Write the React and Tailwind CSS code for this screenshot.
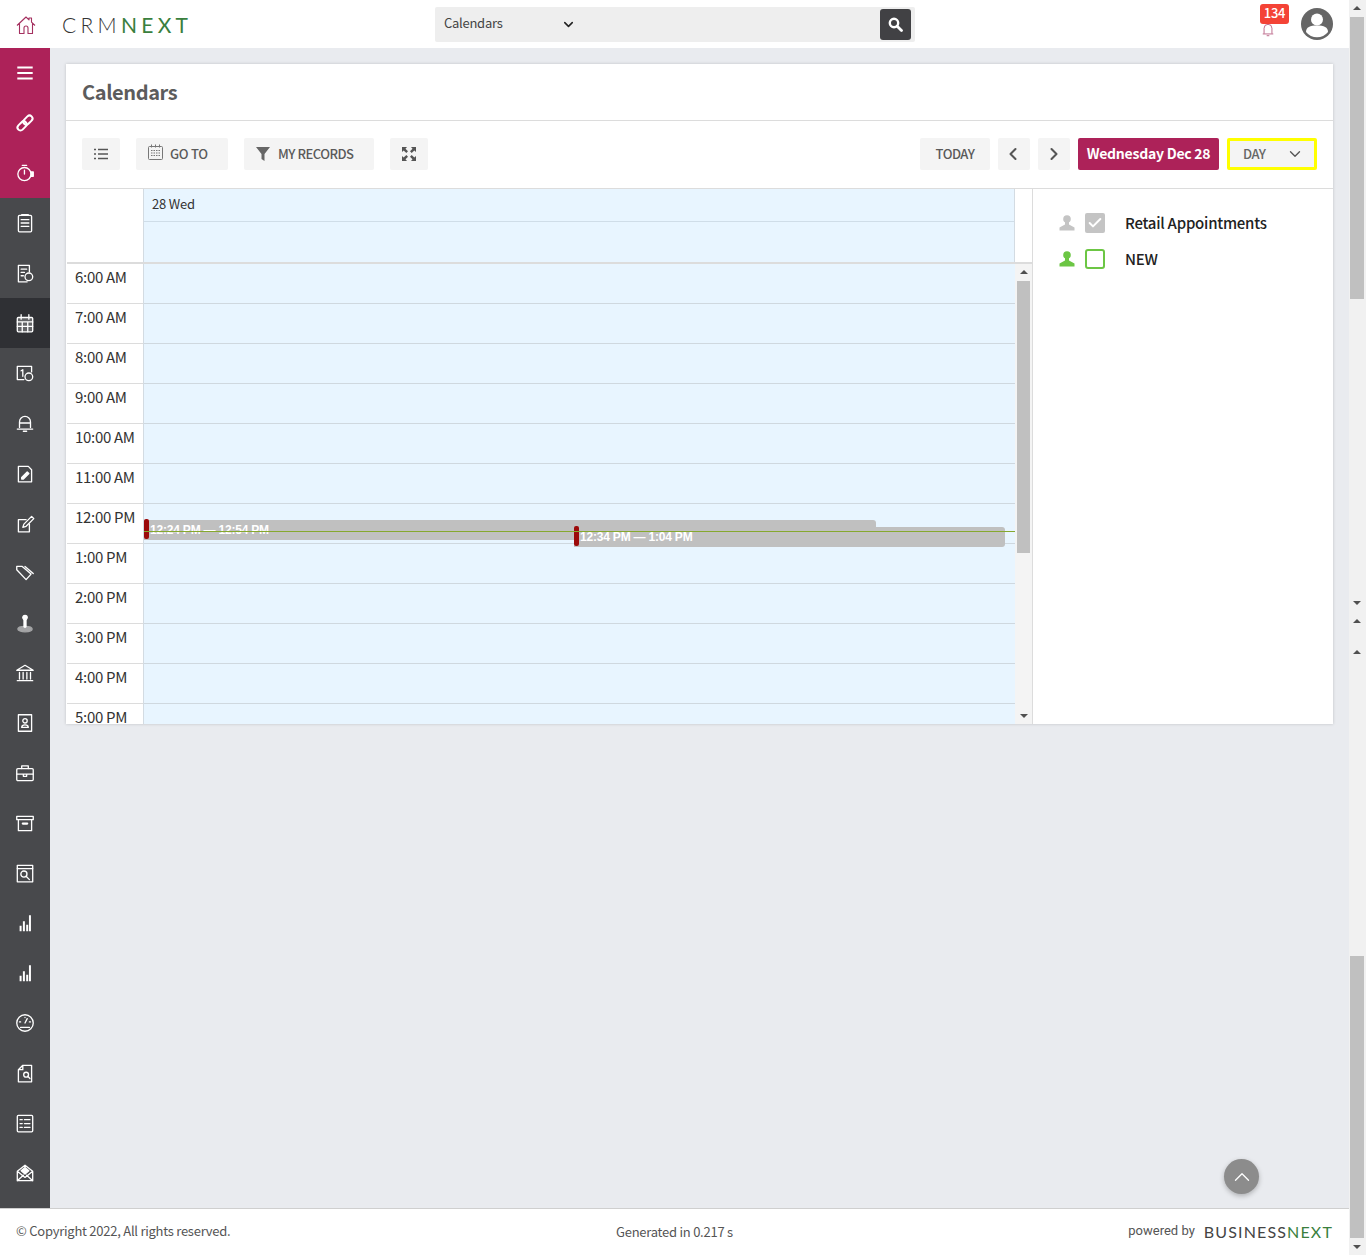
import { ChevronDown, ChevronLeft, ChevronRight, ChevronUp, Check } from 'lucide-react';

const hours = ['6:00 AM', '7:00 AM', '8:00 AM', '9:00 AM', '10:00 AM', '11:00 AM', '12:00 PM', '1:00 PM', '2:00 PM', '3:00 PM', '4:00 PM', '5:00 PM'];

// sidebar glyphs, all drawn on a 20x20 box in white
const glyph = {
  menu: <path d="M3 5h14M3 10h14M3 15h14" strokeWidth="2" strokeLinecap="butt" />,
  link: <g transform="rotate(-45 10 10)"><rect x="1.500" y="7.300" width="9.500" height="5.400" rx="2.700" strokeWidth="1.800" /><rect x="9" y="7.300" width="9.500" height="5.400" rx="2.700" strokeWidth="1.800" /></g>,
  timer: <><circle cx="9.500" cy="11" r="6" /><path d="M9.500 7.500v3.500M7.500 3h4" /><rect x="15.500" y="9" width="2" height="4" fill="#fff" /></>,
  clipboard: <><rect x="4" y="3" width="12" height="15" rx="1" /><path d="M7 2.500h6M6.500 7h7M6.500 10h7M6.500 13h7" /></>,
  docClock: <><path d="M12 18H4V3h10v6M6.500 6.500h5M6.500 9.500h3M6.500 12.500h2" /><circle cx="13.500" cy="13.500" r="3.500" /></>,
  calendar: <><rect x="3" y="5" width="14" height="13" rx="1" fill="#fff" fillOpacity="0.25" /><path d="M6.500 2.500v4M13.500 2.500v4M3 9h14M3 13h14M7.500 9v9M12.500 9v9" /></>,
  dayClock: <><path d="M9 16H3V4h13v5" /><path d="M6.500 8l1.500-1v6" /><circle cx="13.500" cy="13.500" r="3.500" /></>,
  bell: <path d="M5 14V9a5 5 0 0 1 10 0v5M3 15.500h14M8.500 17.500h3M5 10h10" />,
  docPen: <><path d="M4 4h9l3 3v11H4z" /><path d="M7 14l5-5 1.500 1.500-5 5H7z" fill="#fff" /></>,
  notePen: <><path d="M14 11v7H4V7h7" /><path d="M8 14l1-3 7-7 2 2-7 7z" /></>,
  tag: <path d="M2.500 7V4h5l8 7-4.500 5zM10 4l7.500 6.500" />,
  pawn: <><circle cx="10" cy="5" r="2" fill="#fff" /><path d="M10 7v6" strokeWidth="3" /><ellipse cx="10" cy="15.500" rx="6.500" ry="2.500" fill="#fff" opacity="0.5" /></>,
  bank: <path d="M2.500 7.500L10 3l7.500 4.500zM5 9.500v6M8.300 9.500v6M11.700 9.500v6M15 9.500v6M3 17h14" />,
  contact: <><rect x="4" y="2.500" width="12" height="15" /><circle cx="10" cy="8" r="2" /><path d="M7 14c0-3 6-3 6 0z" /></>,
  briefcase: <><rect x="2.500" y="6" width="15" height="11" rx="1" /><path d="M7 6V3.500h6V6M2.500 11h15M8.500 11h3v2h-3z" /></>,
  archive: <><path d="M2.500 4h15v3h-15zM4 7v10h12V7" /><path d="M8 10.500h4" strokeWidth="2" /></>,
  searchWin: <><rect x="3" y="3" width="14" height="15" /><path d="M3 6h14" /><circle cx="9" cy="11" r="2.800" /><path d="M11 13l3 3" /></>,
  bars: <path d="M6 17.500v-5M9 17.500v-9M12 17.500v-6M14.500 17.500V3" strokeWidth="1.800" strokeLinecap="butt" />,
  gauge: <><circle cx="10" cy="10" r="7.500" /><path d="M10 10l2-4M6 14h8M5 9h1M14 9h1M10 5v0" /></>,
  docSearch: <><path d="M8 3h8v15H4V7zM8 3v4H4" /><circle cx="11" cy="11.500" r="2.200" /><path d="M12.500 13l2 2" /></>,
  checklist: <><rect x="3" y="3" width="14" height="15" rx="1" /><path d="M5.500 7h2M9.500 7h5M5.500 10.500h2M9.500 10.500h5M5.500 14h2M9.500 14h5" /></>,
  mailOpen: <><path d="M3 8.500L10 3l7 5.500V17H3zM3 17l5.500-5M17 17l-5.500-5M3 8.500l7 5.500 7-5.500" /><path d="M10 5l3.500 3-3.500 3-3.500-3z" fill="#fff" /></>,
};

const sideTop = ['menu', 'link', 'timer'];
const sideRest = ['clipboard', 'docClock', 'calendar', 'dayClock', 'bell', 'docPen', 'notePen', 'tag', 'pawn', 'bank', 'contact', 'briefcase', 'archive', 'searchWin', 'bars', 'bars', 'gauge', 'docSearch', 'checklist', 'mailOpen'];

function SideIcon({ name, active }) {
  return (
    <div className={'h-[50px] flex items-center justify-center ' + (active ? 'bg-[#2f3034]' : '')}>
      <svg width="22" height="22" viewBox="0 0 20 20" fill="none" stroke="#fff" strokeWidth="1.200" strokeLinecap="round" strokeLinejoin="round">
        {glyph[name]}
      </svg>
    </div>
  );
}

function PersonIcon({ color }) {
  return (
    <svg width="18" height="18" viewBox="0 0 18 18" fill={color}>
      <circle cx="9" cy="5" r="3.800" />
      <path d="M7 8h4v2.500l5.500 3V16.500h-15v-3l5.500-3z" />
    </svg>
  );
}

function TriUp({ className }) {
  return <div className={'w-0 h-0 border-x-[4px] border-x-transparent border-b-[4px] border-b-[#505050] ' + (className || '')} />;
}

function TriDown({ className }) {
  return <div className={'w-0 h-0 border-x-[4px] border-x-transparent border-t-[4px] border-t-[#505050] ' + (className || '')} />;
}

function Event({ className, time }) {
  return (
    <div className={'absolute h-5 bg-[#c0c0c0] rounded-r-[3px] text-white text-[12px] font-bold leading-5 pl-[6px] tracking-[-0.2px] whitespace-nowrap font-["Liberation_Sans",sans-serif] ' + className}>
      <div className="absolute left-0 -top-[1px] h-[20px] w-[5px] bg-[#9c0a0a] rounded-[2px]" />
      {time}
    </div>
  );
}

export default function App() {
  return (
    <div className="h-[1255px] flex bg-[#e9ebef] overflow-hidden text-[#333] font-['Noto_Sans_CJK_SC','Source_Sans_Pro',sans-serif]">
      <div className="w-[1349px] flex flex-col">
        {/* Top bar */}
        <header className="h-12 shrink-0 bg-white flex items-center relative">
          <svg className="ml-[16px] mt-[1px]" width="20" height="20" viewBox="0 0 20 20" fill="none" stroke="#a4305f" strokeWidth="1.100" strokeLinejoin="round">
            <path d="M1 10.500L10 2l3 2.800V3h2.500v4.200l3.500 3.300M3.500 8.500V18.500h4.500v-5.500a2 2 0 0 1 4 0v5.500h4.500V8.500" />
          </svg>
          <div className="ml-[26px] text-[21px] leading-none tracking-[4.300px] font-['Lato',sans-serif] font-light text-[#333] whitespace-nowrap">
            CRM<span className="text-[#3a7f3e] font-normal">NEXT</span>
          </div>
          <div className="absolute left-[435px] top-[7px] w-[480px] h-[35px] bg-[#eeeeee] rounded-[2px] flex items-center">
            <div className="w-[147px] pl-[9px] pr-[6px] flex items-center justify-between text-[13px] tracking-[-0.27px] text-[#444]">
              <span className="pb-[3px]">Calendars</span>
              <ChevronDown size={15} strokeWidth={2.500} className="text-[#222]" />
            </div>
            <div className="flex-1" />
            <div className="w-[31px] h-[31px] mr-[4px] bg-[#414144] rounded-[3px] flex items-center justify-center">
              <svg width="15" height="15" viewBox="0 0 15 15" fill="none" stroke="#fff">
                <circle cx="6" cy="6" r="4.200" strokeWidth="2.400" />
                <path d="M9.200 9.200l4.300 4.300" strokeWidth="2.800" strokeLinecap="round" />
              </svg>
            </div>
          </div>
          <div className="ml-auto mr-[16px] flex items-center relative">
            <svg className="mt-[11px] mr-[26px]" width="14" height="14" viewBox="0 0 16 16" fill="none" stroke="#a4305f" strokeWidth="0.800">
              <path d="M3.500 12V6a4.500 4.500 0 0 1 9 0v6M2 12.500h12M6.500 14.500h3" />
            </svg>
            <div className="absolute left-[-1px] top-[-4px] w-[29px] h-[20px] bg-[#f44336] rounded-[3px] text-white text-[13px] font-medium leading-[18px] tracking-[-0.2px] text-center">134</div>
            <svg width="32" height="32" viewBox="0 0 32 32">
              <circle cx="16" cy="16" r="16" fill="#666" />
              <circle cx="16" cy="11.500" r="6" fill="#fff" />
              <path d="M5 24c0-5 4-6.500 11-6.500S27 19 27 24a14 14 0 0 1-22 0z" fill="#fff" />
            </svg>
          </div>
        </header>

        <div className="flex-1 flex min-h-0">
          {/* Left rail */}
          <aside className="w-[50px] shrink-0 bg-[#48494c]">
            <div className="bg-[#ad2259]">
              {sideTop.map((n, i) => <SideIcon key={i} name={n} />)}
            </div>
            {sideRest.map((n, i) => <SideIcon key={i} name={n} active={n === 'calendar'} />)}
          </aside>

          <main className="flex-1 min-w-0 flex flex-col">
            <div className="flex-1 pt-4 pl-4 pr-4">
              <section className="bg-white shadow-[0_0_3px_rgba(0,0,0,0.18)]">
                <div className="h-[57px] border-b border-[#dcdcdc] flex items-center pl-4 text-[20px] tracking-[-0.4px] font-bold text-[#5c5c5c]">Calendars</div>

                {/* Toolbar */}
                <div className="h-[67px] px-4 pb-[2px] flex items-center text-[13px] tracking-[-0.3px] text-[#5a5a5a]">
                  <button className="w-[38px] h-8 bg-[#f4f4f4] rounded-[2px] flex items-center justify-center">
                    <svg width="14" height="12" viewBox="0 0 14 12" stroke="#555" strokeWidth="1.400">
                      <path d="M0 1.500h2M4 1.500h10M0 6h2M4 6h10M0 10.500h2M4 10.500h10" />
                    </svg>
                  </button>
                  <button className="ml-4 w-[92px] h-8 bg-[#f4f4f4] rounded-[2px] flex items-center pl-3 font-medium">
                    <svg className="mr-[7px] mb-[3px]" width="15" height="16" viewBox="0 0 15 16" fill="none" stroke="#777" strokeWidth="1">
                      <rect x="0.500" y="2.500" width="14" height="13" rx="1" />
                      <path d="M3.500 0.500v3M7.500 0.500v3M11.500 0.500v3M3 6.500h9M3 9h9M3 11.500h9" strokeDasharray="1.500 1" />
                    </svg>
                    GO TO
                  </button>
                  <button className="ml-4 w-[130px] h-8 bg-[#f4f4f4] rounded-[2px] flex items-center pl-3 font-medium tracking-[-0.5px]">
                    <svg className="mr-[8px]" width="14" height="14" viewBox="0 0 14 14" fill="#666">
                      <path d="M0 0h14L8.500 7v7l-3-2V7z" />
                    </svg>
                    MY RECORDS
                  </button>
                  <button className="ml-4 w-[38px] h-8 bg-[#f4f4f4] rounded-[2px] flex items-center justify-center">
                    <svg width="14" height="14" viewBox="0 0 14 14" fill="#555">
                      <path d="M0 0h5L3.500 1.700 6 4.300 4.300 6 1.700 3.500 0 5zM14 0v5l-1.700-1.500L9.700 6 8 4.300l2.500-2.600L9 0zM0 14V9l1.700 1.500L4.300 8 6 9.700l-2.500 2.600L5 14zM14 14H9l1.500-1.700L8 9.700 9.700 8l2.600 2.500L14 9z" />
                    </svg>
                  </button>

                  <button className="ml-auto w-[70px] h-8 bg-[#f4f4f4] rounded-[2px] font-medium tracking-[-0.5px]">TODAY</button>
                  <button className="ml-2 w-8 h-8 pr-[3px] bg-[#f4f4f4] rounded-[2px] flex items-center justify-center">
                    <ChevronLeft size={20} strokeWidth={2.500} className="text-[#555]" />
                  </button>
                  <button className="ml-2 w-8 h-8 pr-[1px] bg-[#f4f4f4] rounded-[2px] flex items-center justify-center">
                    <ChevronRight size={20} strokeWidth={2.500} className="text-[#555]" />
                  </button>
                  <div className="ml-2 w-[141px] h-8 bg-[#ad2259] rounded-[2px] text-white text-[14px] tracking-[-0.25px] whitespace-nowrap font-semibold flex items-center justify-center">Wednesday Dec 28</div>
                  <div className="ml-2 w-[90px] h-8 bg-[#f4f4f4] border-[3px] border-[#ffff00] rounded-[2px] flex items-center justify-between pl-[13px] pr-[10px] font-medium text-[#666] tracking-[-0.5px]">
                    DAY
                    <ChevronDown size={18} strokeWidth={1.800} className="text-[#555]" />
                  </div>
                </div>

                {/* Calendar + legend */}
                <div className="flex border-t border-[#dcdcdc] h-[536px] pl-px">
                  <div className="w-[966px] shrink-0 border-r border-[#dcdcdc] flex flex-col min-w-0">
                    <div className="h-[75px] shrink-0 flex border-b-2 border-[#dcdcdc]">
                      <div className="w-[77px] shrink-0 border-r border-[#d3dbe2]" />
                      <div className="w-[871px] border-r border-[#d3dbe2] bg-[#e8f5ff]">
                        <div className="h-[33px] border-b border-[#cfdde8] pl-2 pb-[2px] flex items-center text-[13px] tracking-[-0.2px]">28 Wed</div>
                      </div>
                    </div>
                    <div className="flex-1 min-h-0 flex relative">
                      <div className="w-[77px] shrink-0 border-r border-[#d3dbe2] overflow-hidden">
                        {hours.map((h) => (
                          <div key={h} className="h-10 border-b border-[#dcdcdc] pl-2 text-[15px] tracking-[-0.3px] leading-[26px] whitespace-nowrap">{h}</div>
                        ))}
                      </div>
                      <div className="w-[871px] bg-[#e8f5ff] overflow-hidden relative">
                        {hours.map((h) => (
                          <div key={h} className="h-10 border-b border-[#cfd8df]" />
                        ))}
                        <Event className="left-0 top-[256px] w-[732px]" time="12:24 PM — 12:54 PM" />
                        <Event className="left-[430px] top-[263px] w-[431px]" time="12:34 PM — 1:04 PM" />
                        <div className="absolute left-0 right-0 top-[267px] h-px bg-[#86a82e]" />
                      </div>
                      {/* inner scrollbar */}
                      <div className="flex-1 bg-[#f4f4f4] flex flex-col items-center">
                        <TriUp className="mt-[6px] mb-[7px]" />
                        <div className="w-[13px] h-[272px] bg-[#c0c0c0]" />
                        <TriDown className="mt-auto mb-[6px]" />
                      </div>
                    </div>
                  </div>

                  {/* Legend */}
                  <div className="flex-1 pl-[25px] pt-[24px] text-[15px] tracking-[-0.25px] font-medium text-[#222]">
                    <div className="h-5 flex items-center">
                      <PersonIcon color="#c4c4c4" />
                      <span className="ml-[9px] w-5 h-5 bg-[#c4c4c4] rounded-[2px] flex items-center justify-center">
                        <Check size={16} strokeWidth={3} className="text-white" />
                      </span>
                      <span className="ml-[20px]">Retail Appointments</span>
                    </div>
                    <div className="h-5 mt-4 flex items-center">
                      <PersonIcon color="#6cc644" />
                      <span className="ml-[9px] w-5 h-5 border-2 border-[#6cc644] rounded-[3px]" />
                      <span className="ml-[20px]">NEW</span>
                    </div>
                  </div>
                </div>
              </section>
            </div>

            <div className="relative">
              <div className="absolute right-[90px] bottom-[14px] w-[35px] h-[35px] rounded-full bg-[#8c8c8c] shadow-[0_2px_5px_rgba(0,0,0,0.25)] flex items-center justify-center">
                <ChevronUp size={26} strokeWidth={1.200} className="text-white" />
              </div>
            </div>
          </main>
        </div>

        {/* Footer */}
        <footer className="h-[47px] shrink-0 bg-white border-t border-[#cfcfcf] flex items-center justify-between px-4 text-[13px] tracking-[-0.25px] text-[#555] relative">
          <span className="pb-[3px]">© Copyright 2022, All rights reserved.</span>
          <span className="absolute left-[616px] top-[13px]">Generated in 0.217 s</span>
          <span className="flex items-center">
            <span className="font-['Roboto',sans-serif] text-[13px] tracking-normal pb-[2px]">powered by</span>
            <span className="ml-[9px] text-[16px] tracking-[1.150px] text-[#444] font-['Lato',sans-serif]">BUSINESS<span className="text-[#3a7f3e]">NEXT</span></span>
          </span>
        </footer>
      </div>

      {/* Page scrollbar */}
      <div className="w-[17px] shrink-0 bg-[#f1f1f1] relative">
        <TriUp className="absolute left-[4px] top-[6px]" />
        <div className="absolute left-[1px] top-[17px] w-[14px] h-[282px] bg-[#c0c0c0]" />
        <TriDown className="absolute left-[4px] top-[601px]" />
        <TriUp className="absolute left-[4px] top-[619px]" />
        <TriUp className="absolute left-[4px] top-[650px]" />
        <div className="absolute left-[1px] top-[956px] w-[14px] h-[282px] bg-[#c0c0c0]" />
        <TriDown className="absolute left-[4px] top-[1245px]" />
      </div>
    </div>
  );
}
